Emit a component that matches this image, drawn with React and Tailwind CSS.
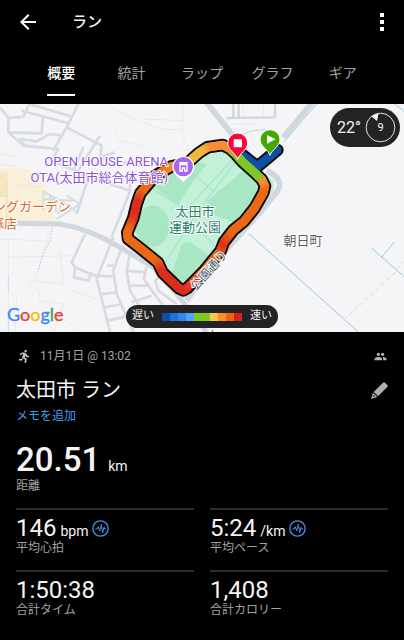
import React, { useState } from 'react';
import { MdArrowBack, MdPeople } from 'react-icons/md';
import { FaRunning } from 'react-icons/fa';

const TABS = ['概要', '統計', 'ラップ', 'グラフ', 'ギア'];

const LEGEND_COLORS = [
  'bg-[#0d4ea6]', 'bg-[#1f6fd6]', 'bg-[#2f86ee]', 'bg-[#52a0fb]', 'bg-[#7dcb1f]',
  'bg-[#7dcb1f]', 'bg-[#f8c64c]', 'bg-[#fb8c2c]', 'bg-[#ee6412]', 'bg-[#da1f1f]'
];

const STATS = [
  { value: '146', unit: 'bpm', label: '平均心拍', pulse: true },
  { value: '5:24', unit: '/km', label: '平均ペース', pulse: true },
  { value: '1:50:38', label: '合計タイム' },
  { value: '1,408', label: '合計カロリー' }
];

const BLUE = [15, 78, 166];
const GREEN = [125, 200, 40];
const YELLOW = [240, 185, 60];
const LIGHT_ORANGE = [250, 140, 50];
const ORANGE = [236, 104, 22];
const RED = [220, 45, 30];

// x, y, pace colour
const START_LEG = [
  [832, 138, BLUE], [772, 188, BLUE], [728, 154, BLUE]
];
const LOOP = [
  [690, 134, LIGHT_ORANGE], [668, 123, LIGHT_ORANGE], [622, 130, LIGHT_ORANGE], [596, 147, YELLOW],
  [564, 176, YELLOW], [512, 188, LIGHT_ORANGE], [466, 215, ORANGE], [421, 268, ORANGE], [410, 300, RED],
  [400, 342, RED], [382, 385, ORANGE], [384, 404, ORANGE], [430, 440, ORANGE], [474, 476, ORANGE],
  [488, 506, RED], [536, 552, RED], [550, 559, RED], [562, 552, RED], [610, 503, ORANGE],
  [662, 440, ORANGE], [672, 414, RED], [700, 378, ORANGE], [732, 352, ORANGE], [764, 312, ORANGE],
  [790, 266, ORANGE], [795, 246, ORANGE], [785, 226, LIGHT_ORANGE], [766, 208, GREEN], [728, 174, GREEN],
  [705, 148, GREEN], [690, 134, LIGHT_ORANGE]
];

function toPoints(line) {
  return line.map(([x, y]) => `${x},${y}`).join(' ');
}

function shade(line) {
  const parts = [];
  for (let i = 0; i < line.length - 1; i++) {
    const [x1, y1, a] = line[i];
    const [x2, y2, b] = line[i + 1];
    const steps = 6;
    for (let s = 0; s < steps; s++) {
      const t = s / steps;
      const u = (s + 1) / steps;
      const rgb = a.map((v, k) => Math.round(v + (b[k] - v) * (t + u) / 2));
      parts.push({
        x1: x1 + (x2 - x1) * t,
        y1: y1 + (y2 - y1) * t,
        x2: x1 + (x2 - x1) * u,
        y2: y1 + (y2 - y1) * u,
        color: `rgb(${rgb.join(',')})`
      });
    }
  }
  return parts;
}

function Route({ line }) {
  return shade(line).map((p, i) => (
    <line key={i} x1={p.x1} y1={p.y1} x2={p.x2} y2={p.y2} stroke={p.color} strokeWidth="26" strokeLinecap="round" />
  ));
}

function MapGeometry() {
  return (
    <svg width="404" height="228" viewBox="0 0 1212 684" fill="none">
      <rect width="1212" height="684" fill="#f5f4f6" />

      {/* Shop block */}
      <path d="M0 196 40 192 122 205 165 350 0 352Z" fill="#faf0d8" />
      <path d="M0 205H22V272H0Z" fill="#f7e7bd" />

      {/* Faint lot lines */}
      <g stroke="#e9eaed" strokeWidth="3">
        <path d="M330 0 345 20 480 75 545 78M430 45 545 50M548 0V100L570 150M340 80 360 110 440 130" />
        <path d="M0 405 160 412M25 460 215 455M150 375 110 520M215 405 180 440 190 540 100 530M25 400V660M110 520 50 580 45 684" />
        <path d="M90 545 120 560 115 590 190 600 185 640 240 684M215 560 290 585M160 684 190 600M120 250 40 240M0 150 60 160M0 180 50 188" />
        <path d="M790 0V38M730 0V38M765 38V60H700" />
      </g>
      <path d="M20 230V350M0 275H20" stroke="#eadfca" strokeWidth="5" />

      {/* Minor streets */}
      <g stroke="#d6dce2" strokeWidth="8" strokeLinejoin="round">
        <path d="M0 10 25 42 70 38 88 0M88 0 210 36M25 42V85L125 88 128 42M25 85 70 125 175 135M65 20 205 58" />
        <path d="M235 0 200 70 160 140M75 125 60 105 110 112 150 90 190 95M200 70 305 125 300 160 420 185" />
        <path d="M175 135 155 170 225 200 265 220 375 255 395 262M265 220 230 330M390 200V262M250 130 220 200M390 262 335 400" />
        <path d="M300 95 235 200M345 145 300 160" />
        <path d="M255 390 215 475 225 490 285 515M225 490 222 520 265 530 275 505M290 525 340 400M290 525 330 684" />
        <path d="M365 430 340 500 350 570 400 684M390 445 380 500 390 560 440 640M440 485 432 525 470 580 520 640" />
        <path d="M285 515 345 518M385 545 445 545M322 485 345 485M380 500 435 505M305 570 350 565M315 610 365 600M395 595 455 575M325 650 385 635M420 440 445 480 465 470" />
        <path d="M500 500 465 530 475 560 530 600" />
      </g>
      <g stroke="#d6dce2" strokeWidth="6">
        <path d="M130 262 235 325M130 262V320M150 270V315M168 278V325M185 290 175 330M200 275 240 300 170 345M130 285 220 290" />
      </g>

      {/* Main roads */}
      <g stroke="#d0d7de" strokeLinejoin="round">
        <path d="M0 357 180 360Q270 375 360 430L460 490 530 570 620 684" strokeWidth="15" />
        <path d="M615 -10 700 95 760 170" strokeWidth="17" />
        <path d="M950 -20 850 100" strokeWidth="17" />
        <path d="M680 42 825 40M700 0V42M716 0V42M825 0V42" strokeWidth="7" />
        <path d="M800 200Q855 225 832 262L780 325 640 480 560 590" strokeWidth="17" />
      </g>

      {/* Waterways */}
      <g stroke="#8fd0dc" strokeWidth="3">
        <path d="M950 0 850 115M1185 0 1212 22M745 388 1075 684M1115 432 1212 518M1145 460 1183 414" />
        <path d="M715 100Q745 76 800 78" strokeDasharray="5 3" />
      </g>
      <path d="M25 520V560M25 640V684" stroke="#c5dfe5" strokeWidth="3" />
      <path d="M158 370 150 410 125 460 115 500" stroke="#b7bdc8" strokeWidth="3" strokeDasharray="4 6" />
      <path d="M1212 470 1180 510 1030 650" stroke="#dadadc" strokeWidth="3" strokeDasharray="14 8" />

      {/* Park */}
      <path d="M365 405 410 250 520 185 620 125 690 125 800 215 825 232 820 262 720 380 550 560Z" fill="#c3f1d7" />
      <g fill="#a9e7c4">
        <path d="M455 245 535 170 620 180 580 230 535 300Z" />
        <path d="M622 290 735 195 780 245 762 300 700 355 610 320Z" />
        <path d="M545 420 570 412 625 455 545 540 515 510Z" />
        <ellipse cx="460" cy="366" rx="48" ry="62" />
        <path d="M400 375 420 340 450 425 430 425Z" />
      </g>
      <g stroke="#98dfc8" strokeWidth="3">
        <path d="M695 170 495 385M705 176 610 300 495 475M450 250 540 305M575 205 640 262M605 385 650 430" />
      </g>

      {/* Route */}
      <g stroke="#0b0b0b" strokeWidth="38" strokeLinejoin="round" strokeLinecap="round">
        <polyline points={toPoints(START_LEG)} />
        <polyline points={toPoints(LOOP)} />
      </g>
      <Route line={START_LEG} />
      <Route line={LOOP} />

      {/* Arena pin */}
      <path d="M517 189a33 33 0 0 1 66 0c0 24-21 28-33 46-12-18-33-22-33-46Z" fill="#fff" />
      <circle cx="550" cy="188" r="29" fill="#a566f0" />
      <path d="M540 201V182H561V201H554V192H547V201ZM540 182V176H545V179H548V176H553V179H556V176H561V182" fill="#a566f0" stroke="#fff" strokeWidth="4" />

      {/* Finish and start pins */}
      <path d="M713 166C708 148 683 138 683 117a30 30 0 0 1 60 0C743 138 718 148 713 166Z" fill="#fb0636" stroke="#fff" strokeWidth="3" />
      <rect x="701" y="106" width="25" height="24" rx="2" fill="#fff" />
      <path d="M810 154C805 137 780 127 780 107a30 30 0 0 1 60 0C840 127 815 137 810 154Z" fill="#43a800" stroke="#fff" strokeWidth="3" />
      <path d="M801 93 827 106 801 119Z" fill="#fff" />
    </svg>
  );
}

function RouteMap() {
  return (
    <svg
      viewBox="0 0 404 228"
      preserveAspectRatio="xMidYMid slice"
      className="block w-full h-full"
      role="img"
      aria-label="太田市運動公園"
    >
      <MapGeometry />
      <g fontSize="13" stroke="#ffffff" strokeWidth="2" strokeLinejoin="round" paintOrder="stroke">
        <g fill="#8c50d8" textAnchor="end">
          <text x="168" y="62">OPEN HOUSE ARENA</text>
          <text x="168" y="78">OTA(太田市総合体育館)</text>
        </g>
        <g fill="#d96a1e" textAnchor="end">
          <text x="71" y="107">ングガーデン</text>
          <text x="17" y="124">塚店</text>
        </g>
        <g fill="#27806a" textAnchor="middle">
          <text x="195" y="112">太田市</text>
          <text x="195" y="128">運動公園</text>
        </g>
        <text x="303" y="141" textAnchor="middle" fill="#5b5f64">朝日町</text>
        <g fontSize="12" fill="#4b5a6b">
          <text transform="translate(196 187) rotate(-48)">公園通り</text>
          <text transform="translate(212 238) rotate(-48)">と</text>
        </g>
      </g>
    </svg>
  );
}

function GoogleMark() {
  return (
    <span className="font-['Lato'] text-lg leading-6 [-webkit-text-stroke:0.4px] [text-shadow:0_0_2px_#fff,0_0_2px_#fff]">
      <span className="text-[#4285f4]">G</span>
      <span className="text-[#ea4335]">o</span>
      <span className="text-[#fbbc05]">o</span>
      <span className="text-[#4285f4]">g</span>
      <span className="text-[#34a853]">l</span>
      <span className="text-[#ea4335]">e</span>
    </span>
  );
}

function PulseIcon() {
  return (
    <svg width="17" height="17" viewBox="0 0 51 51" fill="none" stroke="#4a90e2">
      <circle cx="25.5" cy="25.5" r="23" strokeWidth="4" />
      <path d="M10 27H15L19 20 23 33 28 13 32 38 36 22 38 27H42" strokeWidth="3" strokeLinejoin="round" />
    </svg>
  );
}

function Stat({ value, unit, label, pulse }) {
  return (
    <div className="border-t-2 border-[#2c2c2c] h-[62px] pt-1">
      <div className="flex items-baseline gap-1 h-7">
        <span className="text-2xl leading-7">{value}</span>
        {unit && <span className="text-sm leading-4">{unit}</span>}
        {pulse && (
          <button type="button" aria-label={`${label}のグラフ`} className="self-center">
            <PulseIcon />
          </button>
        )}
      </div>
      <div className="text-xs leading-3 text-[#a3a3a3]">{label}</div>
    </div>
  );
}

export default function App() {
  const [tab, setTab] = useState('概要');

  return (
    <div lang="ja" className="min-h-screen bg-black text-[#f4f4f4] font-['Roboto','Noto_Sans_CJK_JP',sans-serif]">
      {/* Header */}
      <header className="flex items-center h-11 pl-4 pr-3">
        <button type="button" aria-label="戻る" className="text-white">
          <MdArrowBack className="w-6 h-6" />
        </button>
        <h1 className="ml-8 text-[15px] font-medium">ラン</h1>
        <button type="button" aria-label="メニュー" className="ml-auto w-5 flex flex-col items-center gap-[3px]">
          <span className="w-1 h-1 bg-white" />
          <span className="w-1 h-1 bg-white" />
          <span className="w-1 h-1 bg-white" />
        </button>
      </header>

      {/* Tabs */}
      <nav className="grid grid-cols-5 px-[26px] h-15 pt-4">
        {TABS.map(name => (
          <button
            key={name}
            type="button"
            onClick={() => setTab(name)}
            className="flex justify-center items-start text-sm"
          >
            <span className={tab === name
              ? 'h-9 pt-[3px] border-b-2 border-white text-white font-medium'
              : 'h-9 pt-[3px] border-b-2 border-transparent text-[#a3a3a3]'}
            >
              {name}
            </span>
          </button>
        ))}
      </nav>

      {/* Map */}
      <section className="relative h-[228px] overflow-hidden">
        <RouteMap />

        <div className="absolute top-1 right-1 flex items-center gap-1 h-[39px] pl-[7px] pr-1 rounded-full bg-[#232323]">
          <span className="text-base">22°</span>
          <span className="relative flex items-center justify-center w-[31px] h-[31px]">
            <svg viewBox="0 0 93 93" className="absolute inset-0 w-full h-full" fill="none">
              <circle cx="46.5" cy="46.5" r="43" stroke="#e4e4e4" strokeWidth="3" />
              <path d="M19 13 41 4 36 27Z" fill="#fff" />
            </svg>
            <span className="text-[11px] leading-4">9</span>
          </span>
        </div>

        <div className="absolute left-[7px] bottom-1">
          <GoogleMark />
        </div>

        <div className="absolute bottom-1 left-1/2 -translate-x-1/2 flex items-center gap-2 h-[23px] px-1.5 rounded-full bg-[#232323] text-[11px] whitespace-nowrap">
          <span>遅い</span>
          <span className="flex">
            {LEGEND_COLORS.map((color, i) => (
              <span key={i} className={`w-2 h-2 ${color}`} />
            ))}
          </span>
          <span>速い</span>
        </div>
      </section>

      {/* Activity summary */}
      <main className="px-4 pt-4">
        <div className="flex items-center justify-between pr-px h-4 text-xs text-[#a3a3a3]">
          <div className="flex items-center gap-2">
            <FaRunning className="w-4 h-[13px] text-[#c4c4c4]" />
            <span>11月1日 @ 13:02</span>
          </div>
          <MdPeople className="w-[13px] h-[13px] text-[#b4b4b4]" />
        </div>

        <div className="flex items-center justify-between mt-3 h-7">
          <h2 className="text-xl leading-7">太田市 ラン</h2>
          <button type="button" aria-label="名前を編集">
            <svg width="17" height="17" viewBox="0 0 51 51" fill="#aeaeae">
              <path d="M36 2Q39 -1 42 2L49 9Q52 12 49 15L21 43 8 30Z" />
              <path d="M6 32 19 45 0 51ZM8 39 6 44 12 43Z" fillRule="evenodd" />
            </svg>
          </button>
        </div>
        <button type="button" className="block mt-1 text-xs leading-4 text-[#4a98ea]">メモを追加</button>

        <div className="mt-4">
          <div className="flex items-baseline gap-2 h-10">
            <span className="text-[33px] leading-10 font-medium">20.51</span>
            <span className="text-sm leading-4">km</span>
          </div>
          <div className="text-xs leading-3 text-[#a3a3a3]">距離</div>
        </div>

        <div className="grid grid-cols-2 gap-x-4 mt-4">
          {STATS.map(stat => <Stat key={stat.label} {...stat} />)}
        </div>
      </main>
    </div>
  );
}
